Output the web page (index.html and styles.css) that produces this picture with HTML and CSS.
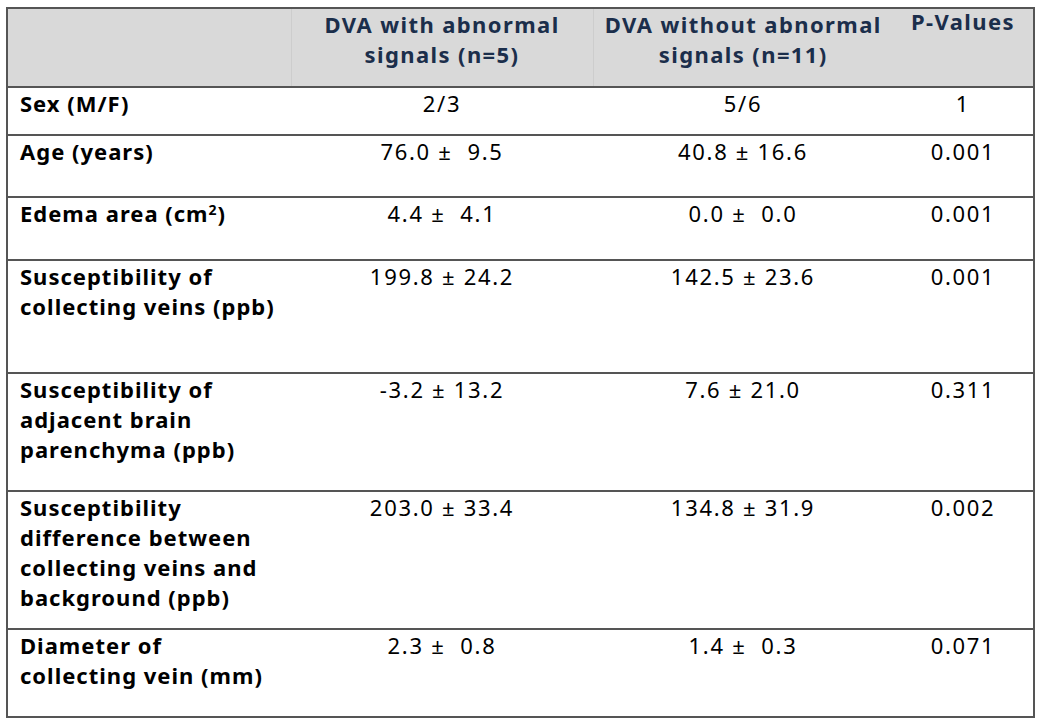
FILE: index.html
```html
<!DOCTYPE html>
<html lang="en">
<head>
<meta charset="utf-8">
<title>DVA table</title>
<link rel="stylesheet" href="styles.css">
</head>
<body>
<table class="data">
  <colgroup>
    <col class="c1"><col class="c2"><col class="c3"><col class="c4">
  </colgroup>
  <thead>
    <tr class="head">
      <th class="h sep"></th>
      <th class="h sep">DVA with abnormal<br>signals (n=5)</th>
      <th class="h">DVA without abnormal<br>signals (n=11)</th>
      <th class="h"><span class="pv">P-Values</span></th>
    </tr>
  </thead>
  <tbody>
    <tr class="r1"><td class="lab">Sex (M/F)</td><td class="val">2/3</td><td class="val">5/6</td><td class="val">1</td></tr>
    <tr class="r2"><td class="lab">Age (years)</td><td class="val">76.0 ±  9.5</td><td class="val">40.8 ± 16.6</td><td class="val">0.001</td></tr>
    <tr class="r3"><td class="lab">Edema area (cm<sup>2</sup>)</td><td class="val">4.4 ±  4.1</td><td class="val">0.0 ±  0.0</td><td class="val">0.001</td></tr>
    <tr class="r4"><td class="lab">Susceptibility of<br>collecting veins (ppb)</td><td class="val">199.8 ± 24.2</td><td class="val">142.5 ± 23.6</td><td class="val">0.001</td></tr>
    <tr class="r5"><td class="lab">Susceptibility of<br>adjacent brain<br>parenchyma (ppb)</td><td class="val">-3.2 ± 13.2</td><td class="val">7.6 ± 21.0</td><td class="val">0.311</td></tr>
    <tr class="r6"><td class="lab">Susceptibility<br>difference between<br>collecting veins and<br>background (ppb)</td><td class="val">203.0 ± 33.4</td><td class="val">134.8 ± 31.9</td><td class="val">0.002</td></tr>
    <tr class="r7"><td class="lab">Diameter of<br>collecting vein (mm)</td><td class="val">2.3 ±  0.8</td><td class="val">1.4 ±  0.3</td><td class="val">0.071</td></tr>
  </tbody>
</table>
</body>
</html>
```
FILE: styles.css
```css
html, body {
  margin: 0;
  padding: 0;
  background: #ffffff;
}
body {
  padding: 7px 0 0 6px;
  font-family: "Noto Sans", "Open Sans", "DejaVu Sans", sans-serif;
  font-size: 22px;
  line-height: 30px;
  color: #000;
}
.data {
  border-collapse: collapse;
  table-layout: fixed;
  width: 1027px;
  border: 2px solid #555;
}
.c1 { width: 284px; }
.c2 { width: 302px; }
.c3 { width: 300px; }
.c4 { width: 141px; }
.data td, .data th {
  padding: 0;
  vertical-align: top;
}
.head { height: 79px; }
.h {
  background: #d9d9d9;
  color: #1b2e4b;
  font-weight: 700;
  text-align: center;
  letter-spacing: 1.4px;
  border-bottom: 2px solid #555;
}
.pv {
  display: block;
  margin-top: -3px;
}
.h.sep { border-right: 1px solid #cdcdcd; }
.data tbody tr { border-bottom: 2px solid #555; }
.lab {
  font-weight: 700;
  padding-left: 12px !important;
  letter-spacing: 1px;
}
.val {
  text-align: center;
  white-space: pre;
  letter-spacing: 1.7px;
}
sup {
  font-size: 14px;
  line-height: 0;
  vertical-align: 7px;
}
.r1 { height: 48px; }
.r2 { height: 62px; }
.r3 { height: 63px; }
.r4 { height: 113px; }
.r5 { height: 118px; }
.r6 { height: 138px; }
.r7 { height: 88px; }
```
